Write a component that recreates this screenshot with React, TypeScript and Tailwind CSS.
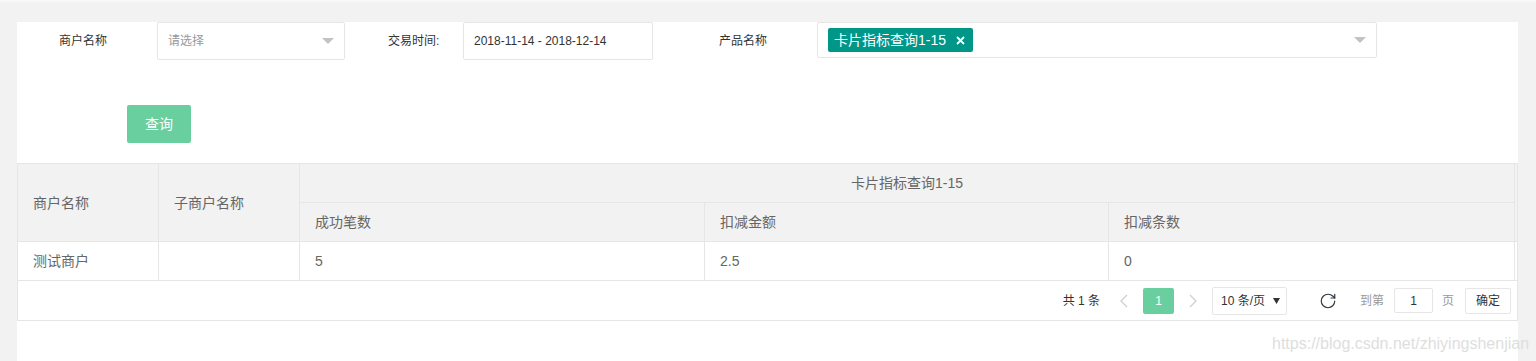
import { RotateCw } from "lucide-react"

function Caret({ color = "#c2c2c2", w = 12, h = 6 }: { color?: string; w?: number; h?: number }) {
  return (
    <svg width={w} height={h} viewBox={`0 0 ${w} ${h}`}>
      <polygon points={`0,0 ${w},0 ${w / 2},${h}`} fill={color} />
    </svg>
  )
}

function Chevron({ dir }: { dir: "left" | "right" }) {
  return (
    <svg width="8" height="14" viewBox="0 0 8 14">
      <polyline
        points={dir === "left" ? "7,1 1,7 7,13" : "1,1 7,7 1,13"}
        fill="none"
        stroke="#cfcfcf"
        strokeWidth="1.3"
      />
    </svg>
  )
}

export default function App() {
  const cols = [
    { label: "成功笔数", value: "5" },
    { label: "扣减金额", value: "2.5" },
    { label: "扣减条数", value: "0" },
  ]

  return (
    <div className="relative h-[361px] overflow-hidden bg-[#f2f2f2] font-['Liberation_Sans','Noto_Sans_CJK_SC',sans-serif]">
      <div className="h-[2px] bg-[#f8f8f8]" />
      <div className="ml-[17px] mr-[18px] mt-[20px] h-[400px] bg-white">
        {/* search form */}
        <div className="flex items-start">
          <div className="w-[140px] pl-[42px] text-xs leading-[38px] text-[#333]">商户名称</div>
          <div className="flex h-[38px] w-[188px] items-center justify-between rounded-[2px] border border-[#e6e6e6] px-[10px]">
            <span className="text-xs text-[#999]">请选择</span>
            <Caret />
          </div>
          <div className="w-[118px] pl-[43px] text-xs leading-[38px] text-[#333]">交易时间:</div>
          <div className="h-[38px] w-[190px] rounded-[2px] border border-[#e6e6e6] pl-[10px] text-xs leading-[36px] text-[#333]">
            2018-11-14 - 2018-12-14
          </div>
          <div className="w-[164px] pl-[66px] text-xs leading-[38px] text-[#333]">产品名称</div>
          <div className="flex h-[36px] w-[560px] items-center justify-between rounded-[2px] border border-[#e6e6e6] px-[10px]">
            <div className="flex h-[24px] items-center rounded-[2px] bg-[#009688] pl-[6px] pr-[8px] text-sm text-white">
              <span className="leading-[24px]">卡片指标查询1-15</span>
              <svg className="ml-[10px]" width="9" height="9" viewBox="0 0 9 9">
                <path d="M1 1 L8 8 M8 1 L1 8" stroke="#fff" strokeWidth="1.8" />
              </svg>
            </div>
            <Caret />
          </div>
        </div>

        <div className="ml-[110px] mt-[45px] flex h-[38px] w-[64px] items-center justify-center rounded-[2px] bg-[#6acf9f] text-sm text-white">
          查询
        </div>

        {/* result table */}
        <div className="mt-[20px] border border-[#e6e6e6]">
          <table className="w-full table-fixed border-separate border-spacing-0 text-sm text-[#666]">
            <colgroup>
              <col className="w-[141px]" />
              <col className="w-[141px]" />
              <col className="w-[405px]" />
              <col className="w-[404px]" />
              <col className="w-[406px]" />
              <col className="w-[2px]" />
            </colgroup>
            <thead>
              <tr>
                <th rowSpan={2} className="border-b border-r border-[#e6e6e6] bg-[#f2f2f2] px-[15px] text-left align-middle font-normal">
                  商户名称
                </th>
                <th rowSpan={2} className="border-b border-r border-[#e6e6e6] bg-[#f2f2f2] px-[15px] text-left align-middle font-normal">
                  子商户名称
                </th>
                <th colSpan={3} className="h-[39px] border-b border-r border-[#e6e6e6] bg-[#f2f2f2] p-0 text-center font-normal leading-[38px]">
                  卡片指标查询1-15
                </th>
                <th rowSpan={2} className="border-b border-[#e6e6e6] bg-[#f2f2f2] p-0" />
              </tr>
              <tr>
                {cols.map((c) => (
                  <th key={c.label} className="h-[39px] border-b border-r border-[#e6e6e6] bg-[#f2f2f2] px-[15px] text-left font-normal leading-[38px]">
                    {c.label}
                  </th>
                ))}
              </tr>
            </thead>
            <tbody>
              <tr>
                <td className="h-[39px] border-b border-r border-[#e6e6e6] px-[15px] leading-[38px]">测试商户</td>
                <td className="border-b border-r border-[#e6e6e6] px-[15px]" />
                {cols.map((c) => (
                  <td key={c.label} className="border-b border-r border-[#e6e6e6] px-[15px] leading-[38px]">
                    {c.value}
                  </td>
                ))}
                <td className="border-b border-[#e6e6e6] p-0" />
              </tr>
            </tbody>
          </table>

          {/* pagination */}
          <div className="flex h-[39px] items-center justify-end whitespace-nowrap pr-[6px] text-xs text-[#333]">
            <span>共 1 条</span>
            <span className="ml-[20px] flex"><Chevron dir="left" /></span>
            <span className="ml-[15px] flex h-[26px] w-[31px] items-center justify-center rounded-[2px] bg-[#6acf9f] text-white">1</span>
            <span className="ml-[15px] flex"><Chevron dir="right" /></span>
            <div className="ml-[15px] flex h-[28px] w-[75px] shrink-0 items-center justify-between rounded-[2px] border border-[#e6e6e6] pl-[8px] pr-[6px] text-xs">
              <span className="whitespace-nowrap">10 条/页</span>
              <Caret color="#333" w={7} h={6} />
            </div>
            <RotateCw className="ml-[32px] shrink-0" size={18} strokeWidth={1.6} color="#2f3a45" />
            <span className="ml-[23px] text-[#999]">到第</span>
            <div className="ml-[10px] flex h-[25px] w-[39px] items-center justify-center rounded-[2px] border border-[#e6e6e6]">1</div>
            <span className="ml-[9px] text-[#999]">页</span>
            <div className="ml-[11px] flex h-[26px] w-[46px] items-center justify-center rounded-[2px] border border-[#e6e6e6]">确定</div>
          </div>
        </div>
      </div>

      <div className="absolute left-[1272px] top-[332px] whitespace-nowrap text-[16px] text-[#dedede]">
        https://blog.csdn.net/zhiyingshenjian
      </div>
    </div>
  )
}
